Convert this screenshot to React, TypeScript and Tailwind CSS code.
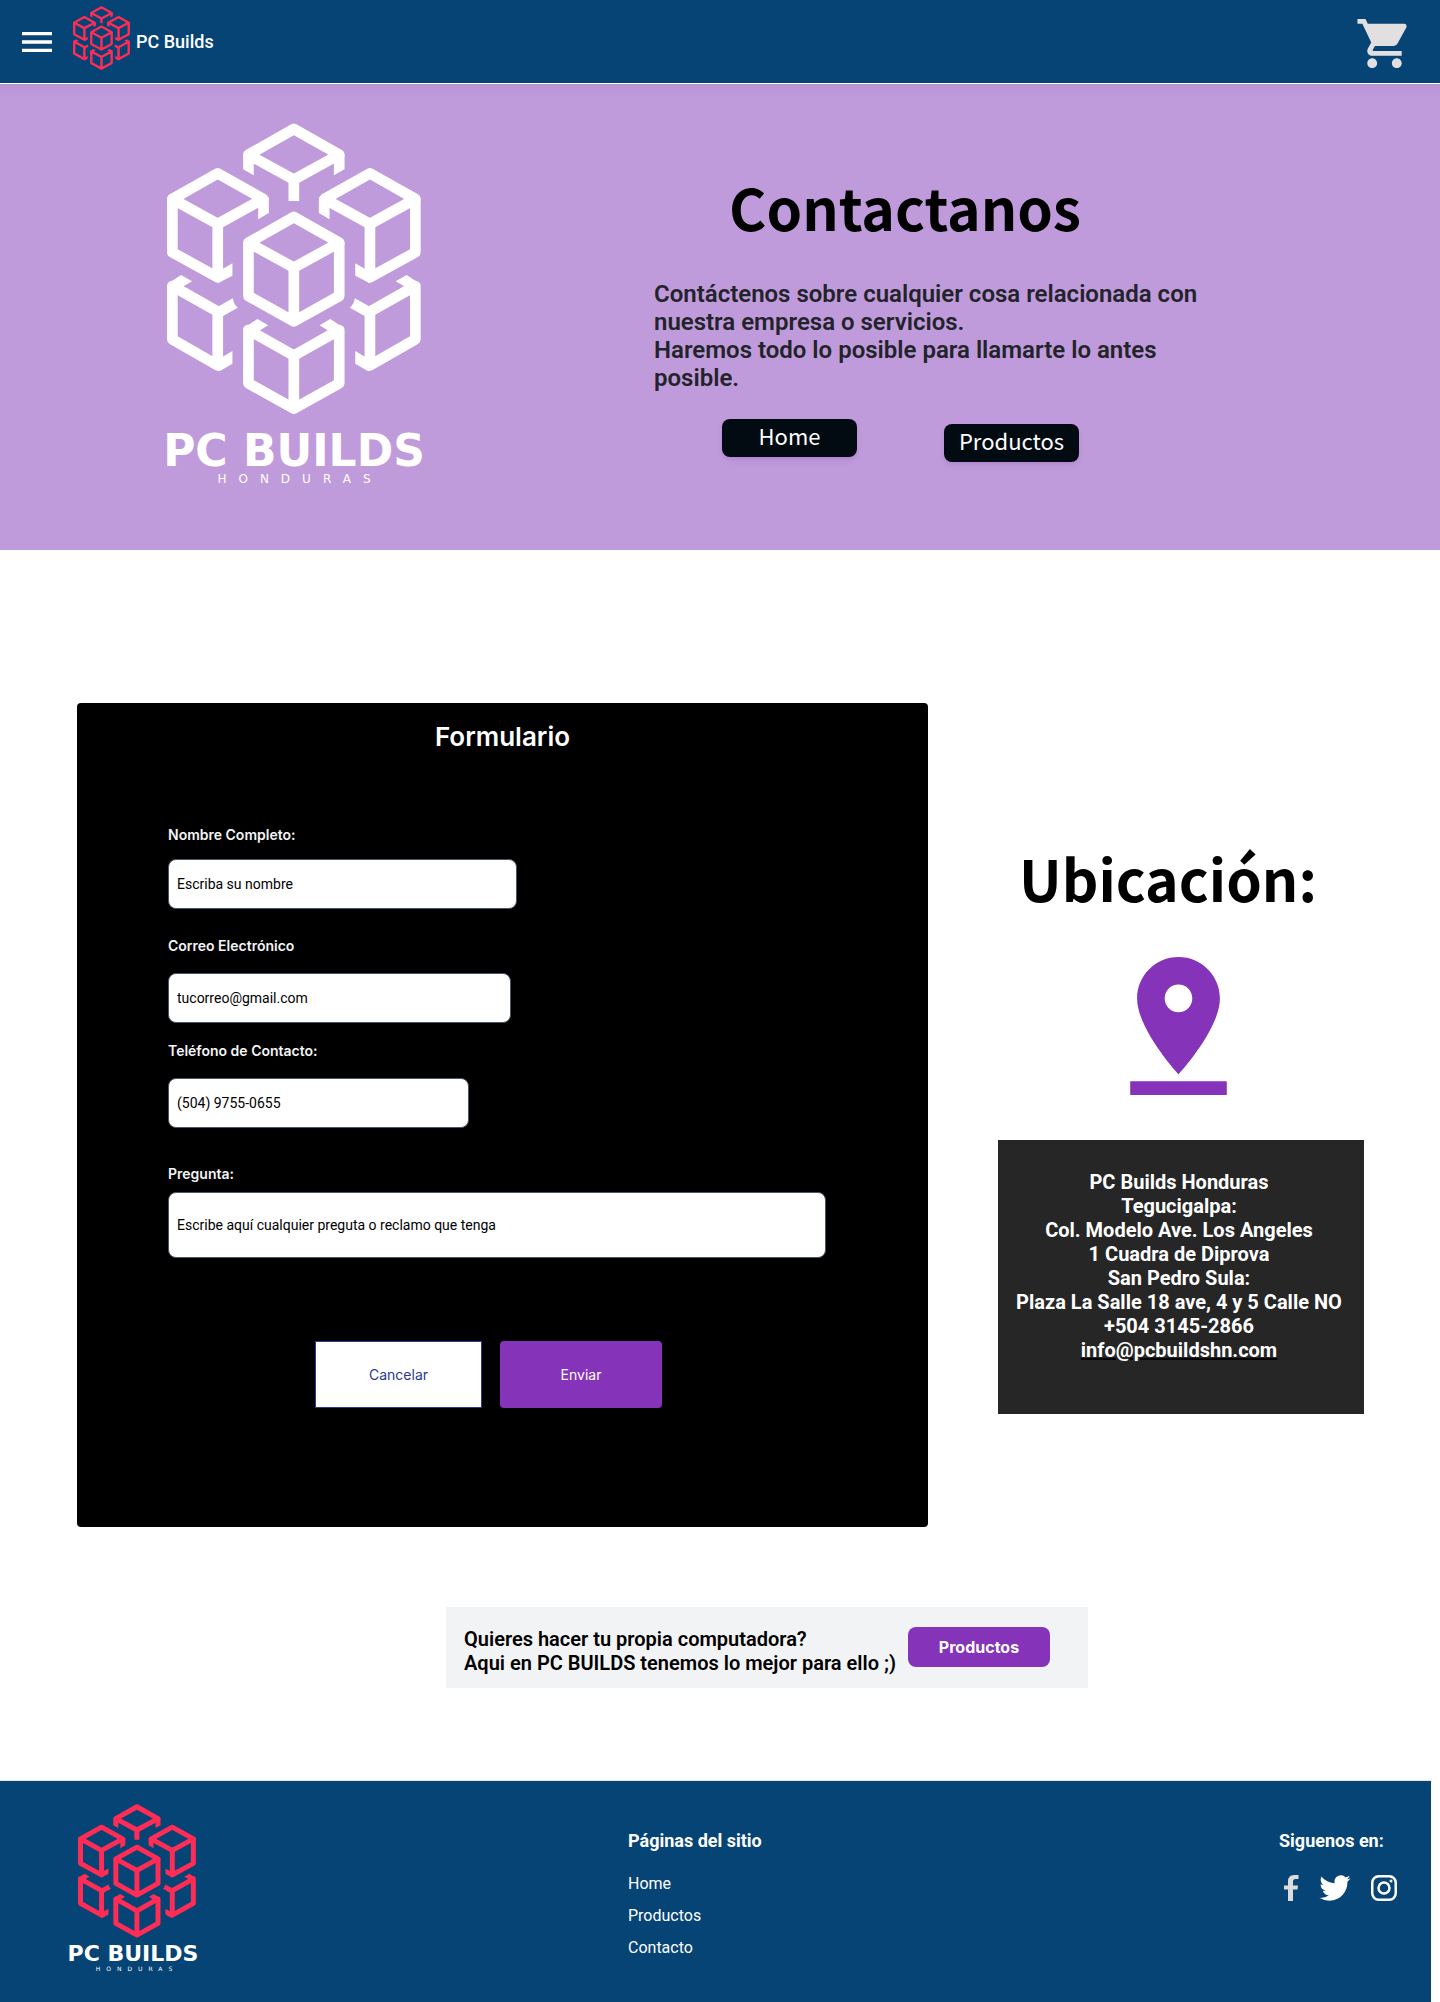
import React from "react";
import { MdMenu, MdShoppingCart } from "react-icons/md";

const HALF_CUBES = [
  // top cube, left stub
  "M339 163V207L371 225V180Z",
  // upper cube, inner stub and lower stub
  "M416 290V338L384 357V310Z",
  "M263 549L307 526V489L263 514Z",
  // lower cube, top stub, inner arm and lower stub
  "M111 552L153 524L186 543L150 564Z",
  "M263 619L308 594Q311 612 323 622L263 656Z",
  "M263 812L271 811L307 790V752L263 778Z",
  // bottom cube, top stub
  "M339 684L382 656L414 675L378 697Z",
];

const HALF_LINES = [
  "M263 219L127 296L263 371L399 296Z",
  "M127 296V456L263 531V371",
  "M263 795L127 717V557L263 634Z",
];

function CubeHalf() {
  return (
    <>
      {HALF_CUBES.map((d) => (
        <path key={d} d={d} fill="currentColor" stroke="none" />
      ))}
      {HALF_LINES.map((d) => (
        <path key={d} d={d} />
      ))}
    </>
  );
}

function Cubes({ className }: { className: string }) {
  return (
    <svg
      viewBox="111 68 761 876"
      preserveAspectRatio="none"
      className={className}
      fill="none"
      stroke="currentColor"
      strokeWidth="32"
      strokeLinejoin="round"
      aria-hidden="true"
    >
      <CubeHalf />
      <g transform="translate(982 0) scale(-1 1)">
        <CubeHalf />
      </g>
      <path d="M491 86L355 163L491 238L627 163Z" />
      <path d="M491 238V302" />
      <path d="M491 350L355 427L491 502L627 427Z" />
      <path d="M355 427V587L491 663L627 587V427M491 502V663" />
      <path d="M491 766L355 689V849L491 925L627 849V689L491 766V925" />
    </svg>
  );
}

function Field({
  id,
  label,
  value,
  type = "text",
  className,
  inputClass,
}: {
  id: string;
  label: string;
  value: string;
  type?: string;
  className: string;
  inputClass: string;
}) {
  return (
    <div className={`flex flex-col ${className}`}>
      <label htmlFor={id} className="font-[Inter] text-sm leading-5 font-semibold text-gray-100">
        {label}
      </label>
      <input
        id={id}
        type={type}
        placeholder={value}
        className={`rounded-lg border border-gray-600 bg-white px-2 text-sm text-black placeholder:text-black ${inputClass}`}
      />
    </div>
  );
}

export default function App() {
  return (
    <div className="bg-white font-[Roboto,sans-serif] text-black">
      <header className="flex h-[84px] items-center border-b border-white bg-[#064475] pr-[26px] pl-[17px] text-white">
        <button type="button" aria-label="Abrir menú">
          <MdMenu size={40} />
        </button>
        <a href="#inicio" className="ml-4 flex items-center gap-1.5">
          <Cubes className="mb-2 h-16 w-[57px] text-[#ff2d55]" />
          <span className="text-lg font-medium">PC Builds</span>
        </a>
        <button type="button" aria-label="Carrito" className="mt-1 ml-auto text-[#e2dfe0]">
          <MdShoppingCart size={59} />
        </button>
      </header>

      <section className="flex h-[466px] bg-gradient-to-b from-[#b994d4] to-[#c09bdb] to-3% pl-[155px]">
        <div className="flex w-[278px] shrink-0 flex-col items-center pt-[39px] text-white">
          <Cubes className="h-[292px] w-[254px]" />
          <p className="mt-3.5 font-['DejaVu_Sans'] text-[44px] leading-[44px] font-bold whitespace-nowrap">PC BUILDS</p>
          <p className="pl-3 font-['DejaVu_Sans'] text-xs leading-3 tracking-[1em]">HONDURAS</p>
        </div>
        <div className="ml-[221px] w-[560px] pt-20">
          <h1 className="pr-[58px] text-center font-['Noto_Sans_CJK_SC',sans-serif] text-[57px] leading-[84px] font-bold">
            Contactanos
          </h1>
          <p className="mt-8 text-2xl leading-7 font-semibold text-[#23232b]">
            Contáctenos sobre cualquier cosa relacionada con nuestra empresa o servicios.
            <br />
            Haremos todo lo posible para llamarte lo antes posible.
          </p>
          <div className="mt-[27px] ml-[68px] flex items-start gap-[87px] font-['Noto_Sans_CJK_SC',sans-serif] text-[22px] leading-8 text-white">
            <button type="button" className="h-[38px] w-[135px] rounded-lg bg-[#030b12] pb-1.5 shadow-md shadow-purple-900/10">
              Home
            </button>
            <button type="button" className="mt-[5px] h-[38px] w-[135px] rounded-lg bg-[#030b12] pb-1.5 shadow-md shadow-purple-900/10">
              Productos
            </button>
          </div>
        </div>
      </section>

      <main className="pt-[153px]">
        <div className="flex items-start gap-[70px] pr-[76px] pl-[77px]">
          <form className="flex h-[824px] flex-1 flex-col rounded bg-black pt-4 pl-[91px]">
            <h2 className="pr-[91px] text-center font-[Inter] text-[26px] leading-9 font-semibold text-white">Formulario</h2>
            <Field id="nombre" label="Nombre Completo:" value="Escriba su nombre" className="mt-[70px] w-[349px] gap-3.5" inputClass="h-[50px]" />
            <Field id="correo" label="Correo Electrónico" value="tucorreo@gmail.com" type="email" className="mt-[27px] w-[343px] gap-[17px]" inputClass="h-[50px]" />
            <Field id="telefono" label="Teléfono de Contacto:" value="(504) 9755-0655" type="tel" className="mt-[18px] w-[301px] gap-[17px]" inputClass="h-[50px]" />
            <Field id="pregunta" label="Pregunta:" value="Escribe aquí cualquier preguta o reclamo que tenga" className="mt-9 mr-[102px] gap-2" inputClass="h-[66px]" />
            <div className="mt-[83px] ml-[147px] flex gap-[18px] font-[Inter] text-sm">
              <button type="button" className="h-[67px] w-[167px] border border-[#2b3990] bg-white text-[#2b3990]">
                Cancelar
              </button>
              <button type="submit" className="h-[67px] w-[162px] rounded-sm bg-[#8533b8] text-white">
                Enviar
              </button>
            </div>
          </form>

          <aside className="flex w-[366px] flex-col items-center pt-[132px]">
            <h2 className="pr-[26px] font-['Noto_Sans_CJK_SC',sans-serif] text-[57px] leading-[84px] font-bold">Ubicación:</h2>
            <svg viewBox="5 2 14 20" className="mt-[38px] mr-1.5 h-[138px] w-[97px] text-[#8533b8]" fill="currentColor" aria-hidden="true">
              <path d="M18 8c0-3.31-2.69-6-6-6S6 4.69 6 8c0 4.5 6 11 6 11s6-6.5 6-11zm-8 0c0-1.1.9-2 2-2s2 .9 2 2-.89 2-2 2c-1.1 0-2-.9-2-2zM5 20v2h14v-2H5z" />
            </svg>
            <address className="mt-[45px] flex h-[274px] w-full flex-col items-center bg-[#262626] pt-[30px] pr-1 text-xl leading-6 font-bold whitespace-nowrap text-white not-italic">
              <span>PC Builds Honduras</span>
              <span>Tegucigalpa:</span>
              <span>Col. Modelo Ave. Los Angeles</span>
              <span>1 Cuadra de Diprova</span>
              <span>San Pedro Sula:</span>
              <span>Plaza La Salle 18 ave, 4 y 5 Calle NO</span>
              <span>+504 3145-2866</span>
              <a href="mailto:info@pcbuildshn.com" className="underline decoration-black decoration-2">
                info@pcbuildshn.com
              </a>
            </address>
          </aside>
        </div>

        <section className="mt-20 mr-[352px] ml-[446px] flex h-[81px] items-center gap-3 bg-[#f2f3f5] pl-[18px]">
          <p className="pt-[7px] text-xl leading-6 font-semibold whitespace-nowrap">
            Quieres hacer tu propia computadora?
            <br />
            Aqui en PC BUILDS tenemos lo mejor para ello ;)
          </p>
          <button type="button" className="mb-0.5 h-10 w-[142px] rounded-lg bg-[#8533b8] font-[Inter] text-base font-bold text-white">
            Productos
          </button>
        </section>
      </main>

      <footer className="mt-[92px] mr-[9px] flex h-[222px] border-t border-gray-200 bg-[#064475] pl-[69px] text-white">
        <div className="flex w-[136px] flex-col items-center pt-[23px]">
          <Cubes className="h-[134px] w-[118px] text-[#ff2d55]" />
          <p className="mt-1 mr-2 font-['DejaVu_Sans'] text-[22px] leading-6 font-bold whitespace-nowrap">PC BUILDS</p>
          <p className="font-['DejaVu_Sans'] text-[6px] leading-[6px] tracking-[1em]">HONDURAS</p>
        </div>
        <nav aria-label="Páginas del sitio" className="ml-[423px] flex flex-col pt-12">
          <h3 className="text-lg leading-6 font-bold">Páginas del sitio</h3>
          <ul className="mt-[15px] text-base leading-8">
            <li><a href="#home">Home</a></li>
            <li><a href="#productos">Productos</a></li>
            <li><a href="#contacto">Contacto</a></li>
          </ul>
        </nav>
        <div className="mr-[34px] ml-auto w-[118px] pt-12">
          <h3 className="text-lg leading-6 font-bold">Siguenos en:</h3>
          <div className="mt-[22px] flex items-center justify-between pl-[5px]">
            <a href="#facebook" aria-label="Facebook">
              <svg viewBox="0 0 15 26" className="h-[26px] w-[15px]" fill="#dcdcdc" aria-hidden="true">
                <path d="M4 26V14.500H0V10.500H4V6.500Q4 0 10 0H14.500V4H11.500Q9 4 9 6.500V10.500H14L13.500 14.500H9V26Z" />
              </svg>
            </a>
            <a href="#twitter" aria-label="Twitter">
              <svg viewBox="0 2 24 20" className="h-[26px] w-8" fill="#fff" aria-hidden="true">
                <path d="M23.954 4.569a10 10 0 0 1-2.825.775 4.958 4.958 0 0 0 2.163-2.723c-.951.555-2.005.959-3.127 1.184a4.920 4.920 0 0 0-8.384 4.482C7.691 8.094 4.066 6.130 1.640 3.161a4.822 4.822 0 0 0-.666 2.475c0 1.710.870 3.213 2.188 4.096a4.904 4.904 0 0 1-2.228-.616v.061a4.923 4.923 0 0 0 3.946 4.827 4.996 4.996 0 0 1-2.212.085 4.937 4.937 0 0 0 4.604 3.417 9.868 9.868 0 0 1-6.102 2.105c-.390 0-.779-.023-1.170-.067a13.995 13.995 0 0 0 7.557 2.209c9.054 0 13.999-7.496 13.999-13.986 0-.209 0-.420-.015-.630a9.936 9.936 0 0 0 2.460-2.548z" />
              </svg>
            </a>
            <a href="#instagram" aria-label="Instagram">
              <svg viewBox="0 0 26 26" className="size-[26px]" fill="none" stroke="#fff" strokeWidth="2.500" aria-hidden="true">
                <rect x="1.250" y="1.250" width="23.500" height="23.500" rx="6.500" />
                <circle cx="13" cy="13" r="5.500" />
                <circle cx="20" cy="6" r="1.500" fill="#fff" stroke="none" />
              </svg>
            </a>
          </div>
        </div>
      </footer>
    </div>
  );
}
